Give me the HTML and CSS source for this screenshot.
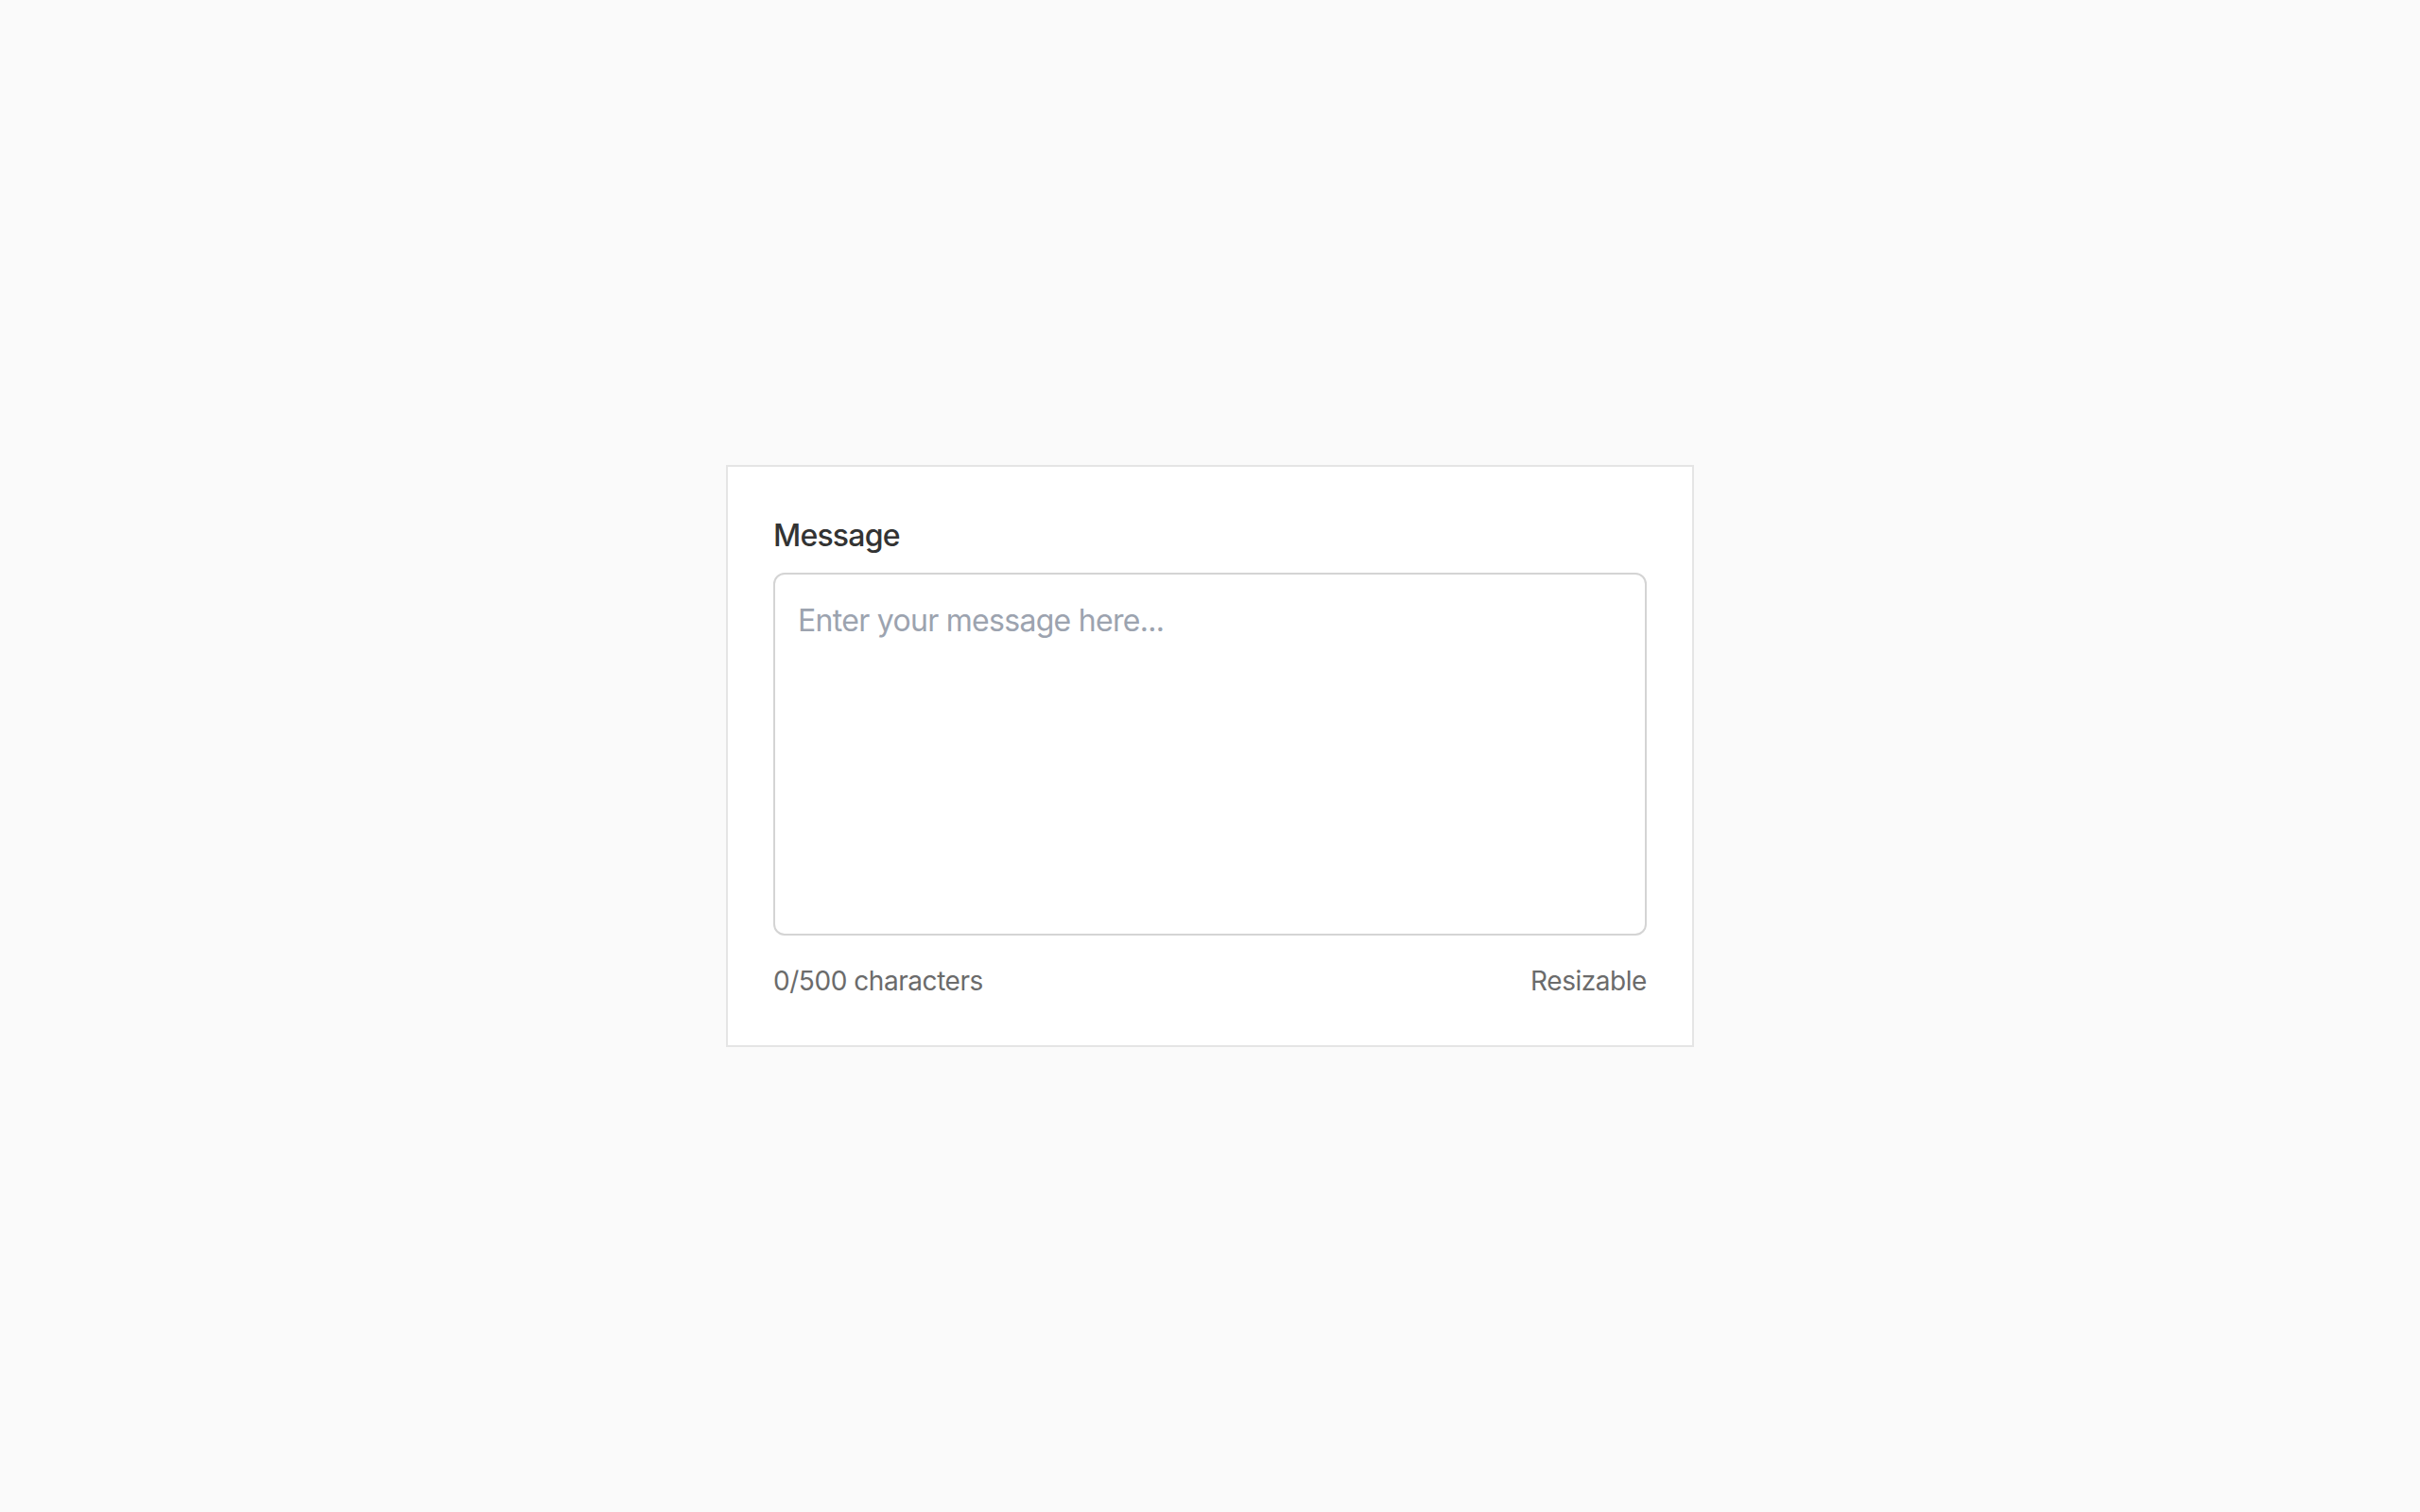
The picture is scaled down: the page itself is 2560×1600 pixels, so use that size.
FILE: index.html
```html
<!DOCTYPE html>
<html lang="en">
<head>
<meta charset="utf-8">
<title>Message</title>
<link rel="stylesheet" href="styles.css">
</head>
<body>
<main class="page">
  <div class="card">
    <label class="label" for="msg">Message</label>
    <textarea id="msg" class="field" placeholder="Enter your message here..."></textarea>
    <div class="meta">
      <span>0/500 characters</span>
      <span>Resizable</span>
    </div>
  </div>
</main>
</body>
</html>
```

FILE: styles.css
```css
* { box-sizing: border-box; }
html, body {
  margin: 0;
  height: 100%;
}
body {
  background: #fafafa;
  font-family: Inter, "Noto Sans", sans-serif;
}
.page {
  min-height: 100%;
  display: flex;
  align-items: center;
  justify-content: center;
}
.card {
  width: 1024px;
  background: #ffffff;
  border: 2px solid #e5e5e5;
  padding: 48px;
  display: flex;
  flex-direction: column;
}
.label {
  display: block;
  font-size: 32px;
  line-height: 48px;
  font-weight: 450;
  letter-spacing: -0.025em;
  color: #333333;
  margin-top: 1px;
  margin-bottom: 15px;
}
.field {
  display: block;
  width: 100%;
  height: 384px;
  border: 2px solid #d4d4d4;
  border-radius: 12px;
  padding: 25px 24px 24px;
  font-family: Inter, "Noto Sans", sans-serif;
  font-size: 32px;
  line-height: 48px;
  letter-spacing: -0.022em;
  color: #333333;
  background: #ffffff;
  resize: none;
  outline: none;
}
.field::placeholder {
  color: #9ca3af;
}
.meta {
  margin-top: 28px;
  display: flex;
  justify-content: space-between;
  font-size: 28px;
  line-height: 40px;
  letter-spacing: -0.016em;
  color: #6b6b6b;
}
```
